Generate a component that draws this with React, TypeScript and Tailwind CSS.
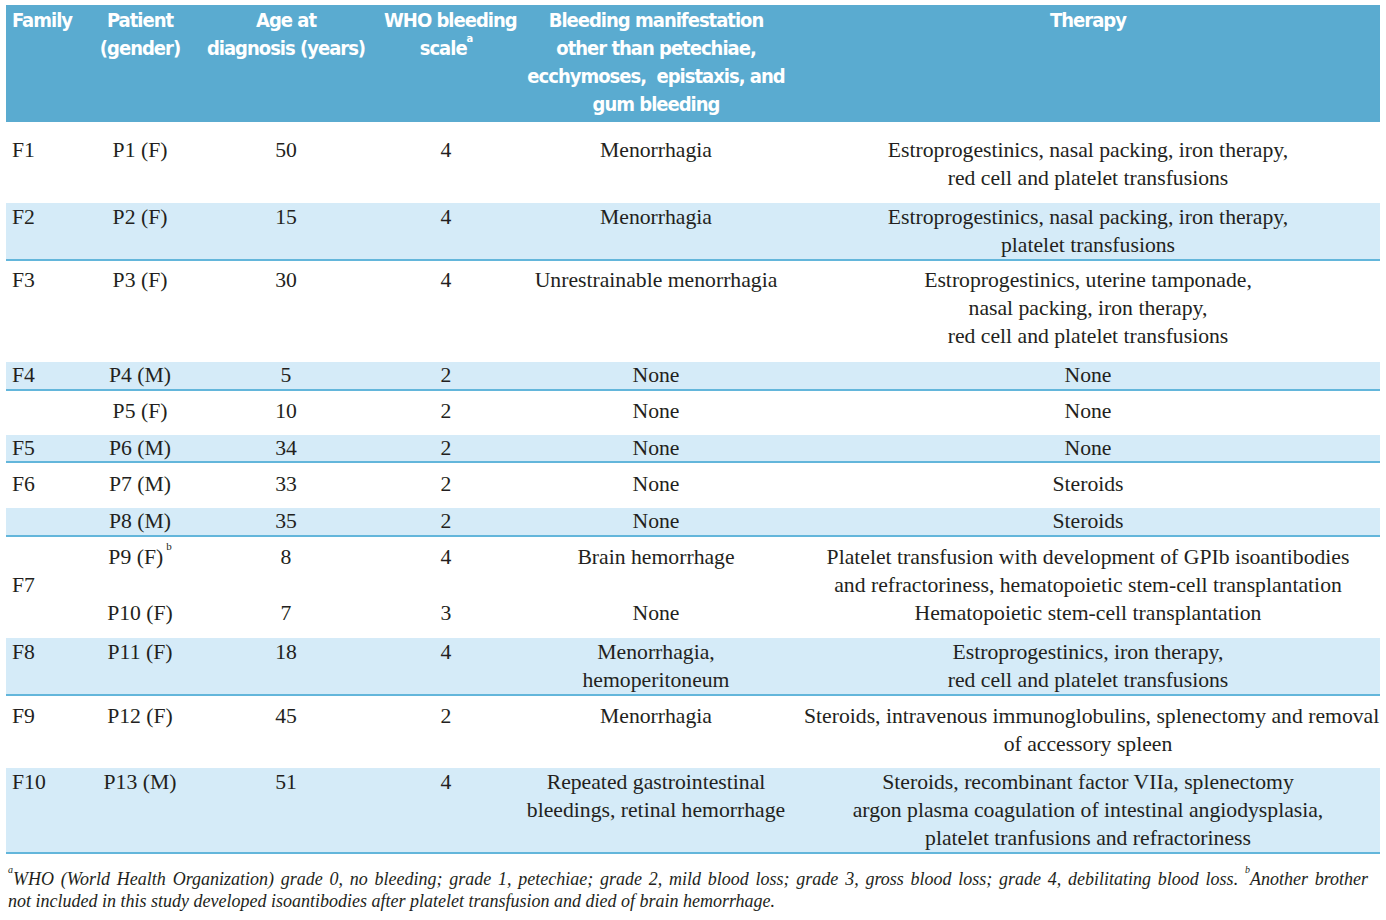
import React from "react";

type Row = {
  family?: string;
  familySpan?: number;
  patient: string;
  sup?: string;
  age: string;
  who: string;
  bleeding: string[];
  therapy: string[];
  stripe?: boolean;
  pad: string;
  leading?: string;
};

const rows: Row[] = [
  {
    family: "F1",
    patient: "P1 (F)",
    age: "50",
    who: "4",
    bleeding: ["Menorrhagia"],
    therapy: ["Estroprogestinics, nasal packing, iron therapy,", "red cell and platelet transfusions"],
    pad: "pt-[14px] pb-[11px]",
  },
  {
    family: "F2",
    patient: "P2 (F)",
    age: "15",
    who: "4",
    bleeding: ["Menorrhagia"],
    therapy: ["Estroprogestinics, nasal packing, iron therapy,", "platelet transfusions"],
    stripe: true,
    pad: "pt-0 pb-0",
  },
  {
    family: "F3",
    patient: "P3 (F)",
    age: "30",
    who: "4",
    bleeding: ["Unrestrainable menorrhagia"],
    therapy: ["Estroprogestinics, uterine tamponade,", "nasal packing, iron therapy,", "red cell and platelet transfusions"],
    pad: "pt-[5px] pb-[12px]",
  },
  {
    family: "F4",
    patient: "P4 (M)",
    age: "5",
    who: "2",
    bleeding: ["None"],
    therapy: ["None"],
    stripe: true,
    pad: "pt-0 pb-0",
    leading: "leading-[27px]",
  },
  {
    family: "",
    patient: "P5 (F)",
    age: "10",
    who: "2",
    bleeding: ["None"],
    therapy: ["None"],
    pad: "pt-[6px] pb-[10px]",
  },
  {
    family: "F5",
    patient: "P6 (M)",
    age: "34",
    who: "2",
    bleeding: ["None"],
    therapy: ["None"],
    stripe: true,
    pad: "pt-0 pb-0",
    leading: "leading-[26px]",
  },
  {
    family: "F6",
    patient: "P7 (M)",
    age: "33",
    who: "2",
    bleeding: ["None"],
    therapy: ["Steroids"],
    pad: "pt-[7px] pb-[10px]",
  },
  {
    family: "",
    patient: "P8 (M)",
    age: "35",
    who: "2",
    bleeding: ["None"],
    therapy: ["Steroids"],
    stripe: true,
    pad: "pt-0 pb-0",
    leading: "leading-[27px]",
  },
  {
    family: "F7",
    familySpan: 2,
    patient: "P9 (F)",
    sup: "b",
    age: "8",
    who: "4",
    bleeding: ["Brain hemorrhage"],
    therapy: [
      "Platelet transfusion with development of GPIb isoantibodies",
      "and refractoriness, hematopoietic stem-cell transplantation",
    ],
    pad: "pt-[6px] pb-0",
  },
  {
    patient: "P10 (F)",
    age: "7",
    who: "3",
    bleeding: ["None"],
    therapy: ["Hematopoietic stem-cell transplantation"],
    pad: "pt-0 pb-[11px]",
  },
  {
    family: "F8",
    patient: "P11 (F)",
    age: "18",
    who: "4",
    bleeding: ["Menorrhagia,", "hemoperitoneum"],
    therapy: ["Estroprogestinics, iron therapy,", "red cell and platelet transfusions"],
    stripe: true,
    pad: "pt-0 pb-0",
  },
  {
    family: "F9",
    patient: "P12 (F)",
    age: "45",
    who: "2",
    bleeding: ["Menorrhagia"],
    therapy: ["Steroids, intravenous immunoglobulins, splenectomy and removal", "of accessory spleen"],
    pad: "pt-[6px] pb-[10px]",
  },
  {
    family: "F10",
    patient: "P13 (M)",
    age: "51",
    who: "4",
    bleeding: ["Repeated gastrointestinal", "bleedings, retinal hemorrhage"],
    therapy: [
      "Steroids, recombinant factor VIIa, splenectomy",
      "argon plasma coagulation of intestinal angiodysplasia,",
      "platelet tranfusions and refractoriness",
    ],
    stripe: true,
    pad: "pt-0 pb-0",
  },
];

function Lines({ items }: { items: string[] }) {
  return (
    <>
      {items.map((t, i) => (
        <div key={i}>{t}</div>
      ))}
    </>
  );
}

export default function App() {
  return (
    <div className="w-[1386px] h-[920px] bg-white pt-[5px] pl-[6px] pr-[6px] overflow-hidden">
      <table className="table-fixed border-collapse w-[1374px] text-[#231f20] font-['Liberation_Serif',serif] text-[21.7px] leading-[28px]">
        <colgroup>
          <col className="w-[86px]" />
          <col className="w-[96px]" />
          <col className="w-[196px]" />
          <col className="w-[124px]" />
          <col className="w-[296px]" />
          <col className="w-[576px]" />
        </colgroup>
        <thead>
          <tr className="bg-[#5aabd0] text-white font-['DejaVu_Sans',sans-serif] font-stretch-condensed font-bold text-[20px] leading-[28px] tracking-[-1px] align-top">
            <th className="text-left pl-[6px] pt-[1px] pb-[4px] font-bold">Family</th>
            <th className="text-center pt-[1px] pb-[4px] font-bold whitespace-nowrap">
              Patient
              <br />
              (gender)
            </th>
            <th className="text-center pt-[1px] pb-[4px] font-bold whitespace-nowrap">
              Age at
              <br />
              diagnosis (years)
            </th>
            <th className="text-center pt-[1px] pb-[4px] font-bold whitespace-nowrap">
              WHO bleeding
              <br />
              scale<sup className="text-[11px] leading-none align-super">a</sup>
            </th>
            <th className="text-center pt-[1px] pb-[4px] font-bold whitespace-nowrap">
              Bleeding manifestation
              <br />
              other than petechiae,
              <br />
              ecchymoses,&nbsp; epistaxis, and
              <br />
              gum bleeding
            </th>
            <th className="text-center pr-[8px] pt-[1px] pb-[4px] font-bold">Therapy</th>
          </tr>
        </thead>
        <tbody>
          {rows.map((r, i) => {
            const cell = `${r.pad} ${r.leading ?? ""} ${r.stripe ? "border-b-2 border-[#63b6db]" : ""}`;
            return (
              <tr key={i} className={`${r.stripe ? "bg-[#d5ebf8]" : "bg-white"} align-top`}>
                {r.family !== undefined && (
                  <td
                    rowSpan={r.familySpan}
                    className={`pl-[6px] text-left ${r.familySpan ? "align-middle pt-[6px] pb-[11px]" : cell}`}
                  >
                    {r.family}
                  </td>
                )}
                <td className={`text-center whitespace-nowrap ${cell}`}>
                  {r.patient}
                  {r.sup && <sup className="text-[11px] leading-none align-super ml-[3px]">{r.sup}</sup>}
                </td>
                <td className={`text-center ${cell}`}>{r.age}</td>
                <td className={`text-center ${cell}`}>{r.who}</td>
                <td className={`text-center whitespace-nowrap ${cell}`}>
                  <Lines items={r.bleeding} />
                </td>
                <td className={`text-center whitespace-nowrap pr-[8px] ${cell}`}>
                  <Lines items={r.therapy} />
                </td>
              </tr>
            );
          })}
        </tbody>
      </table>
      <div className="mt-[14px] pl-[2px] pr-[12px] italic font-['Liberation_Serif',serif] text-[18px] leading-[22px] text-[#231f20]">
        <p className="text-justify [text-align-last:justify] whitespace-nowrap">
          <sup className="text-[10px] leading-none align-super">a</sup>WHO (World Health Organization) grade 0, no
          bleeding; grade 1, petechiae; grade 2, mild blood loss; grade 3, gross blood loss; grade 4, debilitating
          blood loss. <sup className="text-[10px] leading-none align-super">b</sup>Another brother
        </p>
        <p>not included in this study developed isoantibodies after platelet transfusion and died of brain hemorrhage.</p>
      </div>
    </div>
  );
}
